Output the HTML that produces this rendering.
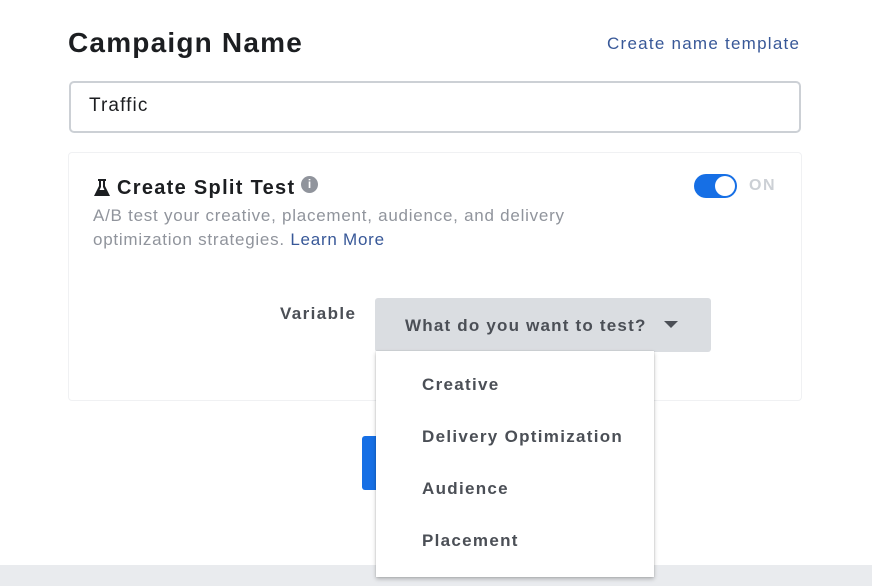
<!DOCTYPE html>
<html><head><style>
*{margin:0;padding:0;box-sizing:border-box}
body{width:872px;height:586px;background:#fff;font-family:"Liberation Sans",Arial,sans-serif;position:relative;overflow:hidden}
.a{position:absolute;white-space:nowrap}
</style></head><body>
<div class="a" style="left:68px;top:27px;font-size:28px;font-weight:bold;color:#1c1e21;letter-spacing:1.2px">Campaign Name</div>
<div class="a" style="left:607px;top:34px;font-size:17px;color:#385898;letter-spacing:1.25px">Create name template</div>
<div class="a" style="left:69px;top:81px;width:732px;height:52px;border:2px solid #ccd0d5;border-radius:5px"></div>
<div class="a" style="left:89px;top:95px;font-size:19px;color:#1c1e21;letter-spacing:1.1px">Traffic</div>
<div class="a" style="left:68px;top:152px;width:734px;height:249px;border:1px solid #f0f1f3;border-radius:4px"></div>
<svg class="a" style="left:93px;top:178px" width="18" height="20" viewBox="0 0 18 20"><path d="M5 1h8v2h-1v5l5 10H1L6 8V3H5z" fill="#1c1e21"/><path d="M8 3h2v6l3 6H5l3-6z" fill="#fff"/><path d="M6 12h6l2 4H4z" fill="#1c1e21"/></svg>
<div class="a" style="left:117px;top:177px;font-size:20px;font-weight:bold;color:#1c1e21;letter-spacing:1.3px">Create Split Test</div>
<div class="a" style="left:301px;top:176px;width:17px;height:17px;border-radius:50%;background:#90949c;color:#fff;font-size:12px;font-weight:bold;text-align:center;line-height:17px">i</div>
<div class="a" style="left:93px;top:204px;font-size:17px;line-height:24px;color:#90949c;letter-spacing:0.75px">A/B test your creative, placement, audience, and delivery<br>optimization strategies. <span style="color:#385898">Learn More</span></div>
<div class="a" style="left:694px;top:174px;width:43px;height:24px;border-radius:12px;background:#166fe5"></div>
<div class="a" style="left:715px;top:176px;width:20px;height:20px;border-radius:50%;background:#fff"></div>
<div class="a" style="left:749px;top:177px;font-size:16px;font-weight:bold;color:#ccd0d5;letter-spacing:1.5px">ON</div>
<div class="a" style="left:280px;top:304px;font-size:17px;font-weight:bold;color:#4b4f56;letter-spacing:1.4px">Variable</div>
<div class="a" style="left:375px;top:298px;width:336px;height:54px;background:#dadde1;border-radius:3px"></div>
<div class="a" style="left:405px;top:316px;font-size:17px;font-weight:bold;color:#4b4f56;letter-spacing:1.2px">What do you want to test?</div>
<svg class="a" style="left:664px;top:321px" width="14" height="8"><path d="M0 0h14L7 7z" fill="#4b4f56"/></svg>
<div class="a" style="left:362px;top:436px;width:16px;height:54px;background:#166fe5;border-radius:3px 0 0 3px"></div>
<div class="a" style="left:0;top:565px;width:872px;height:21px;background:#e9ebee"></div>
<div class="a" style="left:376px;top:351px;width:278px;height:226px;background:#fff;box-shadow:0 2px 4px rgba(0,0,0,.25),0 0 1px rgba(0,0,0,.2)"></div>
<div class="a" style="left:422px;top:375px;font-size:17px;font-weight:bold;color:#4b4f56;line-height:20px;letter-spacing:1.3px">Creative</div>
<div class="a" style="left:422px;top:427px;font-size:17px;font-weight:bold;color:#4b4f56;line-height:20px;letter-spacing:1.3px">Delivery Optimization</div>
<div class="a" style="left:422px;top:479px;font-size:17px;font-weight:bold;color:#4b4f56;line-height:20px;letter-spacing:1.3px">Audience</div>
<div class="a" style="left:422px;top:531px;font-size:17px;font-weight:bold;color:#4b4f56;line-height:20px;letter-spacing:1.3px">Placement</div>
</body></html>
